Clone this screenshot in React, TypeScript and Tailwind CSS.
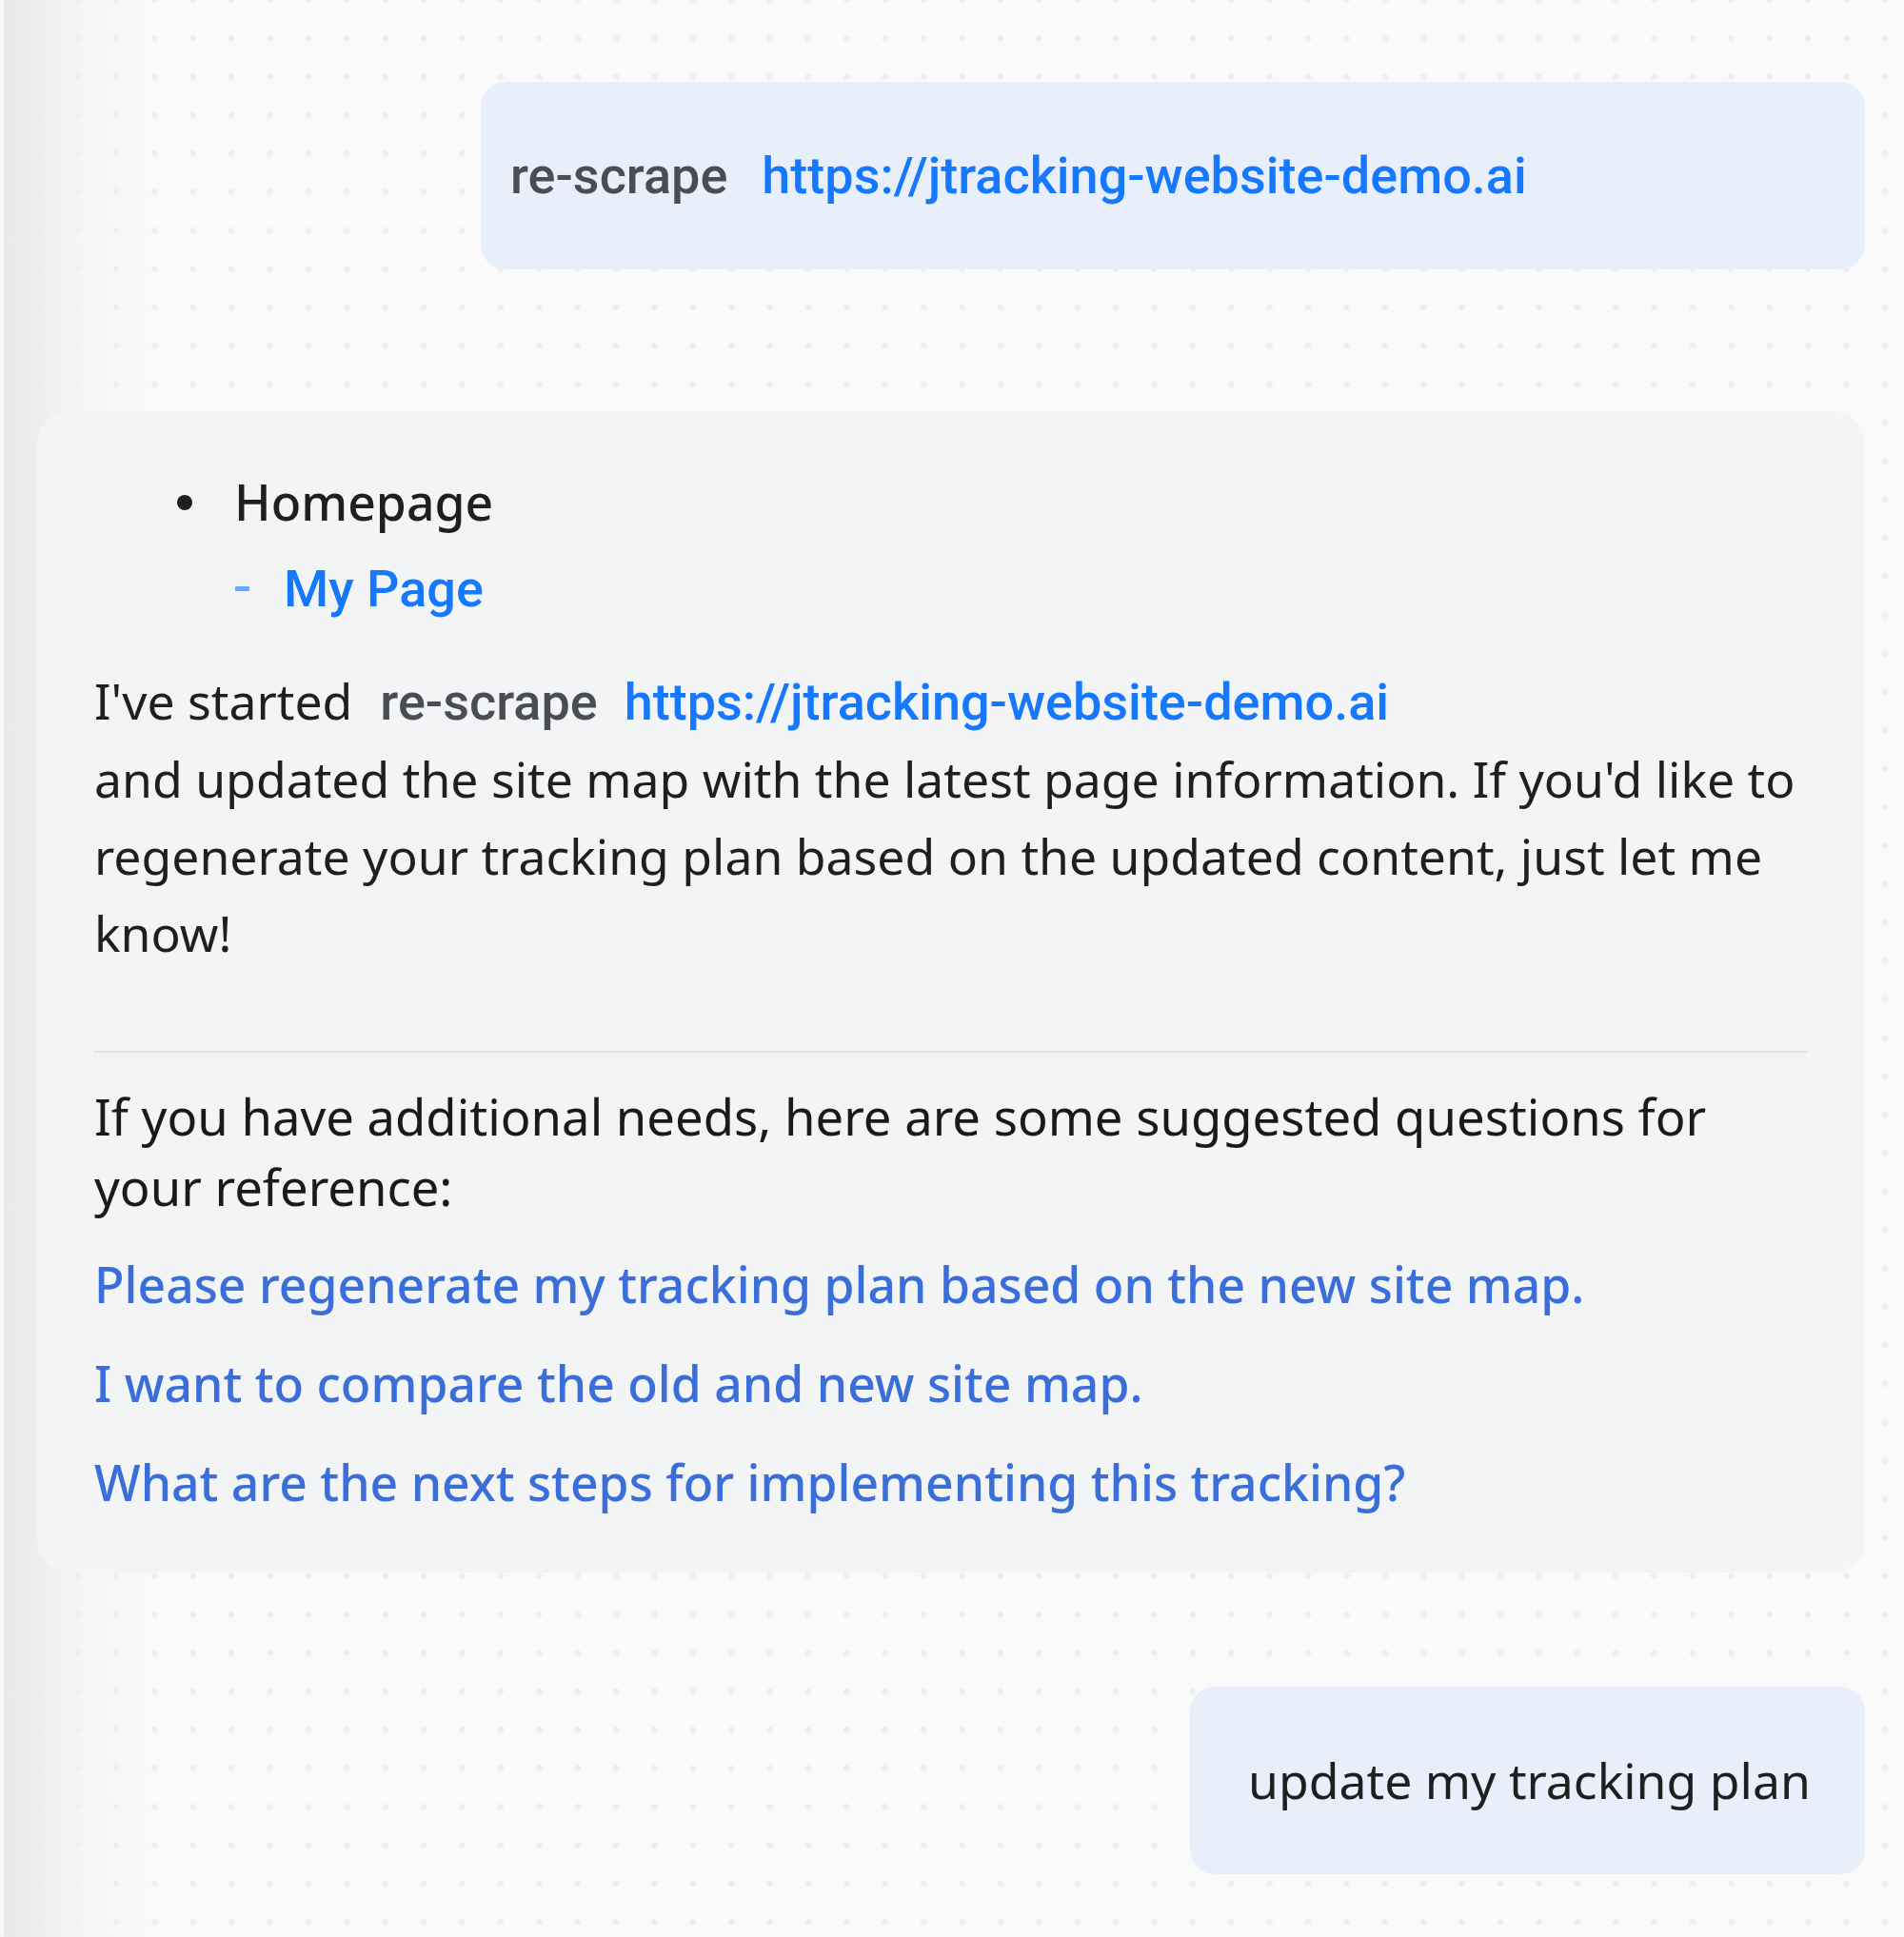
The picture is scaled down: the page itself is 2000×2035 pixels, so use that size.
import React from 'react'

const body = "font-['Noto_Sans',sans-serif]"
const chip = "font-['Roboto','Noto_Sans',sans-serif]"

function Tag({ children }: { children: React.ReactNode }) {
  return <span className={`${chip} text-[54px] font-medium text-[#4a4d52]`}>{children}</span>
}

function LinkTag({ children }: { children: React.ReactNode }) {
  return <span className={`${chip} text-[54px] font-medium text-[#1677ff]`}>{children}</span>
}

const suggestions = [
  'Please regenerate my tracking plan based on the new site map.',
  'I want to compare the old and new site map.',
  'What are the next steps for implementing this tracking?',
]

export default function App() {
  return (
    <div className="relative min-h-[2035px] w-full overflow-hidden bg-[#fafafa] bg-[radial-gradient(circle,#eceef3_3px,transparent_3.6px)] bg-[length:40.4px_40.4px] bg-[position:21px_20px]">
      {/* left edge shade */}
      <div className="pointer-events-none absolute inset-y-0 left-0 w-[160px] border-l-4 border-[#f7f7f7] bg-gradient-to-r from-[#e9e9e9] via-[#f0f0f0]/60 to-transparent" />

      <div className="relative flex flex-col pl-[39px] pr-[41px] pt-[86px]">
        {/* user message */}
        <div className="ml-auto flex h-[197px] w-[1454px] items-center gap-[36px] rounded-[26px] bg-[#e8effa] pl-[31px]">
          <Tag>re-scrape</Tag>
          <LinkTag>https://jtracking-website-demo.ai</LinkTag>
        </div>

        {/* assistant reply */}
        <div className={`${body} mt-[149px] rounded-[33px] bg-[#f3f4f6] pb-[58px] pl-[60px] pr-[60px] pt-[50px] text-[51.7px] text-[#1f1f1f]`}>
          <ul className="pl-[87px] leading-[91px]">
            <li className="flex items-center">
              <span className="mr-[44px] inline-block h-[16px] w-[16px] rounded-full bg-[#1f1f1f]" />
              <span className="font-medium">Homepage</span>
            </li>
            <li className="flex items-center pl-[61px]">
              <span className="mr-[36px] inline-block h-[5px] w-[15px] rounded-[1px] bg-[#6fa6ff]" />
              <span className={`${chip} text-[54px] font-medium text-[#1677ff]`}>My Page</span>
            </li>
          </ul>

          <p className="mt-[32px] leading-[81px]">
            I've started
            <span className="ml-[29px] mr-[28px]"><Tag>re-scrape</Tag></span>
            <LinkTag>https://jtracking-website-demo.ai</LinkTag>
            <br />
            and updated the site map with the latest page information. If you'd like to regenerate your tracking plan based on the updated content, just let me know!
          </p>

          <div className="mt-[83px] h-[2px] bg-[#dfe0e3]" />

          <p className="mt-[30px] pr-[60px] text-[52.6px] leading-[74px] text-[#1a1a1a]">
            If you have additional needs, here are some suggested questions for your reference:
          </p>

          <div className="mt-[28px] flex flex-col gap-[30px]">
            {suggestions.map((q) => (
              <div key={q} className="font-medium leading-[74px] text-[#3a6fdb]">
                {q}
              </div>
            ))}
          </div>
        </div>

        {/* user message */}
        <div className={`${body} ml-auto mt-[120px] flex h-[197px] w-[709px] items-center rounded-[26px] bg-[#e8effa] pl-[61px] text-[51.7px] text-[#1f1f1f]`}>
          update my tracking plan
        </div>
      </div>
    </div>
  )
}
